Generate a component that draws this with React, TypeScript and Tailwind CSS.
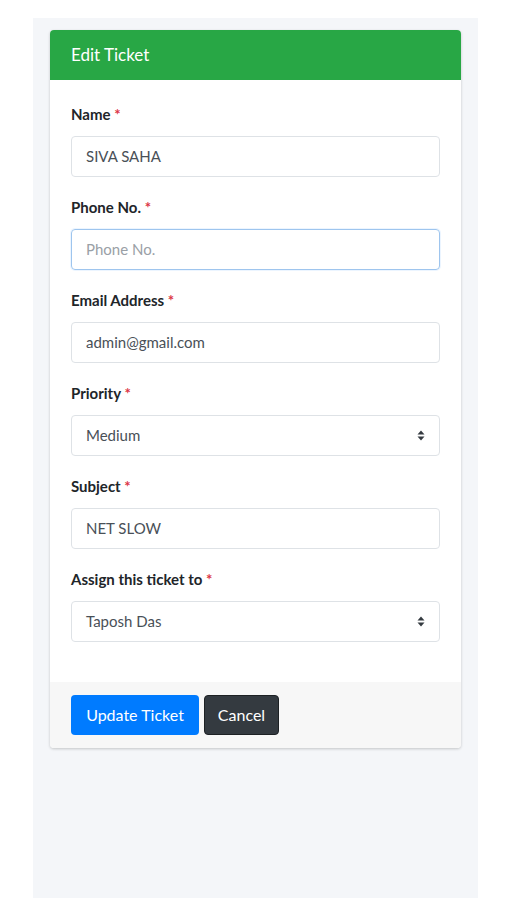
const fields = [
  { label: "Name", value: "SIVA SAHA" },
  { label: "Phone No.", placeholder: "Phone No.", focus: true },
  { label: "Email Address", value: "admin@gmail.com" },
  { label: "Priority", value: "Medium", select: true },
  { label: "Subject", value: "NET SLOW" },
  { label: "Assign this ticket to", value: "Taposh Das", select: true },
];

function Caret() {
  return (
    <svg width="8" height="11" viewBox="0 0 8 11" className="text-[#343a40]">
      <path d="M4 0.5 L7.5 4.5 H0.5 Z" fill="currentColor" />
      <path d="M4 10.5 L7.5 6.5 H0.5 Z" fill="currentColor" />
    </svg>
  );
}

export default function App() {
  return (
    <div className="min-h-[900px] bg-white pt-[18px] pl-[33px] pr-[28px] font-['Lato','Open_Sans',sans-serif]">
      <div className="bg-[#f4f6f9] h-[880px] px-[17px] pt-[12px]">
        {/* card */}
        <div className="bg-white rounded-[4px] shadow-[0_1px_3px_rgba(0,0,0,0.2)] overflow-hidden">
          <div className="bg-[#28a745] h-[50px] px-[21px] flex items-center text-white text-[17px]">
            Edit Ticket
          </div>

          <div className="px-[21px] pt-[23px] pb-[21px]">
            {fields.map((f) => (
              <div key={f.label} className="mb-[19px]">
                <label className="block text-[15px] leading-[22px] font-bold text-[#212529] mb-[11px]">
                  {f.label} <span className="text-[#dc3545]">*</span>
                </label>
                <div
                  className={
                    "h-[41px] rounded-[4px] border px-[14px] flex items-center justify-between text-[15px] " +
                    (f.focus ? "border-[#9ec5ee] shadow-[0_0_0_1px_rgba(128,189,255,0.15)]" : "border-[#dee2e6]")
                  }
                >
                  {f.value ? (
                    <span className="text-[#495057]">{f.value}</span>
                  ) : (
                    <span className="text-[#9aa0a6]">{f.placeholder}</span>
                  )}
                  {f.select && <Caret />}
                </div>
              </div>
            ))}
          </div>

          <div className="bg-[#f7f7f7] px-[21px] py-[13px] flex gap-[5px]">
            <button className="h-[40px] w-[128px] rounded-[4px] bg-[#007bff] text-white text-[16px]">
              Update Ticket
            </button>
            <button className="h-[40px] w-[75px] rounded-[4px] bg-[#343a40] border border-[#1d2124] text-white text-[16px]">
              Cancel
            </button>
          </div>
        </div>
      </div>
    </div>
  );
}
